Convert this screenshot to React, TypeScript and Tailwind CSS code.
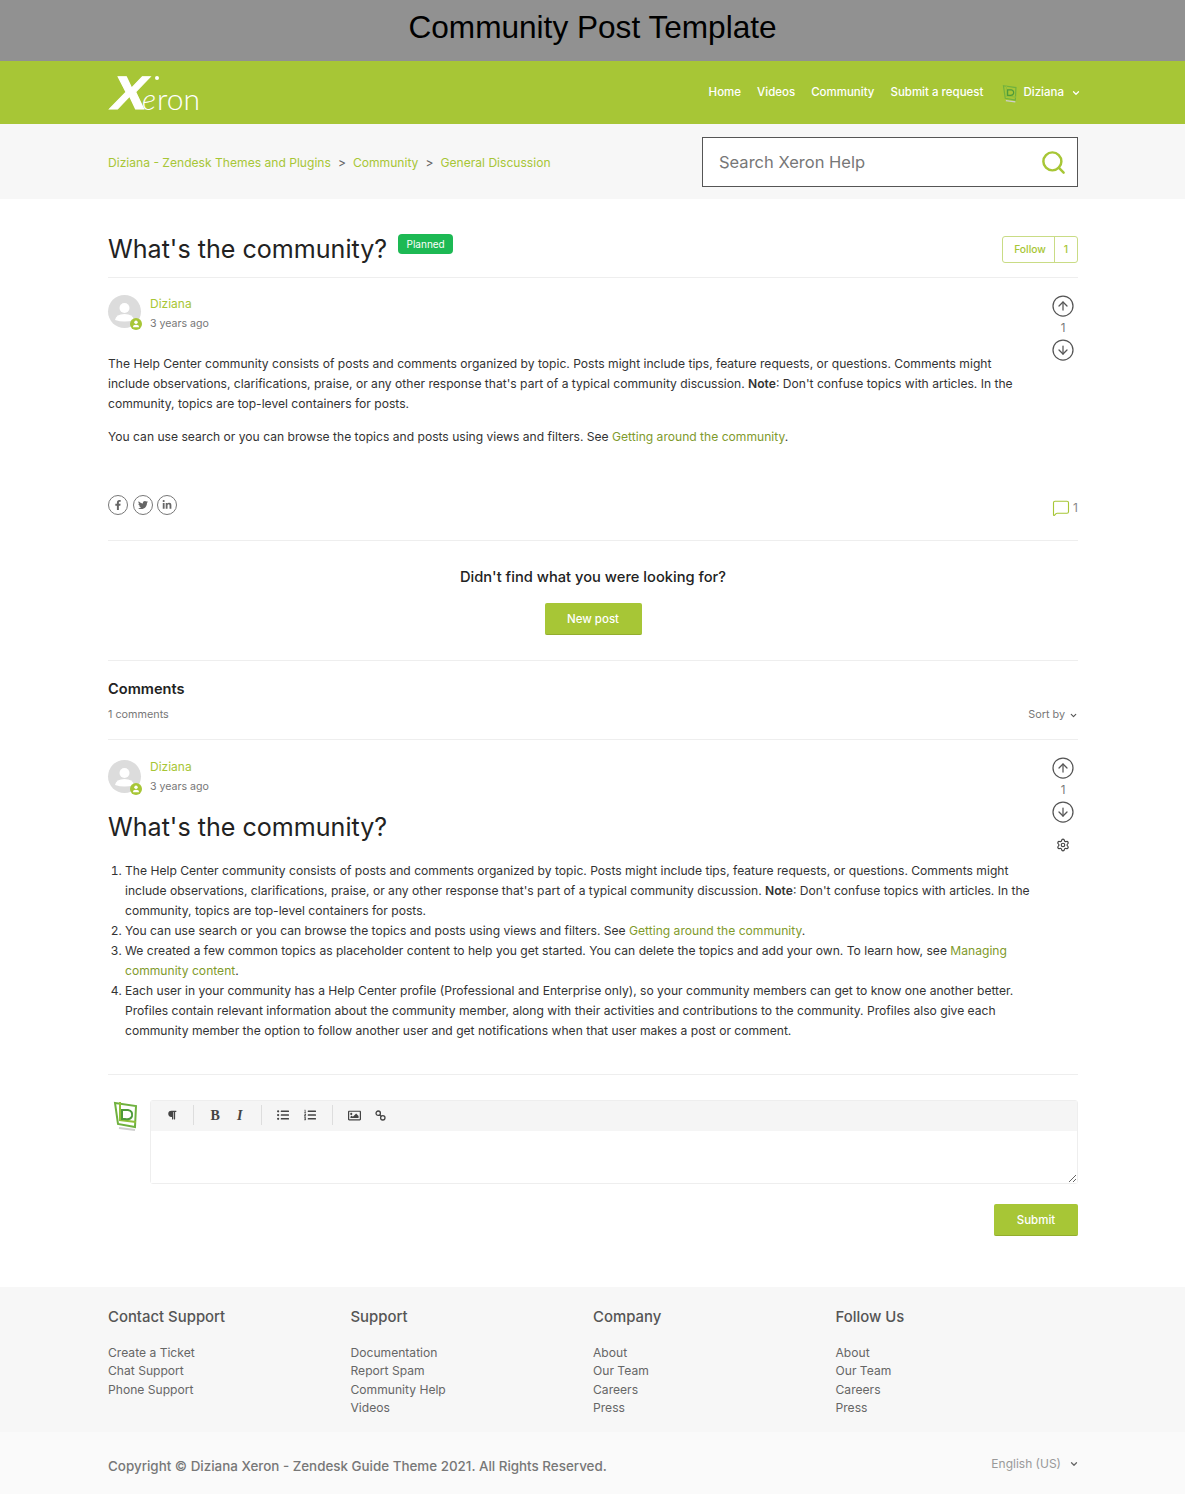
import { ChevronDown, CircleArrowDown, CircleArrowUp, MessageSquare, Search, Settings } from "lucide-react";
import { FaFacebookF, FaLinkedinIn, FaListOl, FaListUl, FaParagraph, FaRegImage, FaTwitter } from "react-icons/fa";

const footerColumns = [
  { title: "Contact Support", links: ["Create a Ticket", "Chat Support", "Phone Support"] },
  { title: "Support", links: ["Documentation", "Report Spam", "Community Help", "Videos"] },
  { title: "Company", links: ["About", "Our Team", "Careers", "Press"] },
  { title: "Follow Us", links: ["About", "Our Team", "Careers", "Press"] },
];

function LeafLogo({ className }: { className: string }) {
  return (
    <svg viewBox="0 0 26 32" fill="none" className={className}>
      <path d="M2 3 L23 6 L22 27 L5 24 Z" stroke="#6fb13f" strokeWidth="2" />
      <path d="M7 2 V20 L23 22" stroke="#8fbf3a" strokeWidth="2" />
      <path d="M9 10 H15 Q20 11 19 16 Q18 20 12 19 H9 Z" stroke="#4c9a3a" strokeWidth="2" />
      <path d="M6 28 L22 30" stroke="#cfcfcf" strokeWidth="2" />
    </svg>
  );
}

function Author({ textOffset }: { textOffset: string }) {
  return (
    <div className="flex items-start gap-[9px]">
      <div className="relative h-[33px] w-[33px] rounded-full bg-[#dcdcdc]">
        <svg viewBox="0 0 33 33" className="h-[33px] w-[33px]">
          <circle cx="16.5" cy="13" r="5" fill="#fff" />
          <path d="M7 25 Q8 19 16.5 19 Q25 19 26 25 Q16.5 28 7 25 Z" fill="#fff" />
        </svg>
        <div className="absolute -bottom-[2px] -right-[1px] flex h-3 w-3 items-center justify-center rounded-full bg-[#a7c636]">
          <svg viewBox="0 0 12 12" className="h-3 w-3">
            <circle cx="6" cy="4.3" r="1.7" fill="#fff" />
            <path d="M3 9.2 Q3 6.8 6 6.8 Q9 6.8 9 9.2 Z" fill="#fff" />
          </svg>
        </div>
      </div>
      <div className={textOffset}>
        <div className="text-[12px] leading-[20px] text-[#a7c636]">Diziana</div>
        <div className="text-[10.6px] leading-[19px] text-[#777]">3 years ago</div>
      </div>
    </div>
  );
}

function Votes() {
  return (
    <div className="flex w-[24px] flex-col items-center text-[#555]">
      <CircleArrowUp className="h-[24px] w-[24px]" strokeWidth={1.25} />
      <div className="text-[11.5px] leading-[20px] text-[#777]">1</div>
      <CircleArrowDown className="h-[24px] w-[24px]" strokeWidth={1.25} />
    </div>
  );
}

function SocialIcon({ children }: { children: React.ReactNode }) {
  return (
    <div className="flex h-[20px] w-[20px] items-center justify-center rounded-full border-[1.5px] border-[#777] text-[10px] text-[#666]">
      {children}
    </div>
  );
}

export default function App() {
  return (
    <div className="min-h-[1494px] bg-white font-['Inter',sans-serif] text-[#333]">
      <div className="flex h-[61px] items-center justify-center bg-[#919191] pb-[6px] font-['Liberation_Sans',sans-serif] text-[31.6px] text-black">
        Community Post Template
      </div>

      <header className="flex h-[63px] items-center justify-between bg-[#a7c636] pl-[108px] pr-[104px]">
        <div className="relative h-[40px] w-[95px] leading-none text-white">
          <span className="absolute left-[5px] top-[-4px] origin-left -skew-x-12 scale-x-[1.12] font-['Liberation_Sans',sans-serif] text-[47px] font-bold [-webkit-text-stroke:1px_white]">X</span>
          <span className="absolute left-[34px] top-[10px] font-['Lato',sans-serif] text-[30px] font-light italic">e</span>
          <span className="absolute left-[49px] top-[10px] font-['Lato',sans-serif] text-[30px] font-light">ron</span>
          <span className="absolute left-[47px] top-[3px] h-[4px] w-[4px] rounded-full bg-white" />
        </div>
        <nav className="flex items-center pt-px text-[11.5px] font-medium text-white">
          <span className="mr-4">Home</span>
          <span className="mr-4">Videos</span>
          <span className="mr-4">Community</span>
          <span className="mr-[19px]">Submit a request</span>
          <LeafLogo className="mr-[5px] h-[19px] w-[16px]" />
          <span className="mr-[7px]">Diziana</span>
          <ChevronDown className="h-[10px] w-[10px]" strokeWidth={3} />
        </nav>
      </header>

      <div className="flex h-[75px] items-center justify-between bg-[#f7f7f7] pl-[108px] pr-[107px]">
        <div className="flex items-center pt-[3px] text-[12.1px] text-[#a7c636]">
          <span>Diziana - Zendesk Themes and Plugins</span>
          <span className="mx-[7px] text-[#666]">&gt;</span>
          <span>Community</span>
          <span className="mx-[7px] text-[#666]">&gt;</span>
          <span>General Discussion</span>
        </div>
        <div className="mt-px flex h-[50px] w-[376px] items-center justify-between border border-[#555] bg-white pl-[16px] pr-[10px]">
          <span className="pt-px text-[16.5px] text-[#777]">Search Xeron Help</span>
          <Search className="h-[27px] w-[27px] text-[#a7c636]" strokeWidth={2.2} />
        </div>
      </div>

      <main className="pl-[108px] pr-[107px]">
        <div className="flex h-[79px] items-center justify-between border-b border-[#eeeeee] pt-[23px]">
          <div className="flex items-start">
            <h1 className="text-[25.1px] font-normal leading-[31px] text-[#222]">What's the community?</h1>
            <span className="ml-[11px] flex h-5 w-[55px] items-center justify-center rounded-sm bg-[#1db954] text-[10px] text-white">Planned</span>
          </div>
          <div className="flex h-[27px] w-[76px] rounded-[3px] border border-[#c9dc85] text-[10.3px] font-medium text-[#a7c636]">
            <span className="flex w-[52px] items-center justify-center border-r border-[#c9dc85] pl-[3px]">Follow</span>
            <span className="flex flex-1 items-center justify-center">1</span>
          </div>
        </div>

        <div className="flex justify-between pt-[17px]">
          <div className="w-[915px]">
            <Author textOffset="-mt-px" />
            <p className="mt-[21px] text-[12.1px] leading-[20px]">
              The Help Center community consists of posts and comments organized by topic. Posts might include tips, feature requests, or questions. Comments might include observations, clarifications, praise, or any other response that's part of a typical community discussion. <b className="font-semibold">Note</b>: Don't confuse topics with articles. In the community, topics are top-level containers for posts.
            </p>
            <p className="mt-[13px] text-[12.1px] leading-[20px]">
              You can use search or you can browse the topics and posts using views and filters. See <span className="text-[#7f9a2c]">Getting around the community</span>.
            </p>
          </div>
          <div className="mr-[3px] -mt-px">
            <Votes />
          </div>
        </div>

        <div className="mt-[49px] flex h-[45px] items-start justify-between border-b border-[#eeeeee]">
          <div className="-mt-px flex gap-[4.5px]">
            <SocialIcon><FaFacebookF /></SocialIcon>
            <SocialIcon><FaTwitter /></SocialIcon>
            <SocialIcon><FaLinkedinIn /></SocialIcon>
          </div>
          <div className="mt-[3px] flex items-center gap-[3px] text-[12px] text-[#888]">
            <MessageSquare className="h-[18px] w-[18px] text-[#a7c636]" strokeWidth={1.5} />
            <span>1</span>
          </div>
        </div>

        <div className="flex h-[120px] flex-col items-center border-b border-[#eeeeee] pt-[26px]">
          <div className="text-[14.7px] font-medium leading-[20px] text-[#222]">Didn't find what you were looking for?</div>
          <button className="mt-[16px] h-[32px] w-[97px] rounded-[2px] border-b border-[#93ad2d] bg-[#a7c636] pt-[2px] text-[11.5px] font-medium text-white">New post</button>
        </div>

        <div className="flex h-[79px] flex-col border-b border-[#eeeeee] pt-[18px]">
          <div className="text-[14.6px] font-semibold leading-[20px] text-[#222]">Comments</div>
          <div className="mt-[9px] flex items-center justify-between text-[10.8px] leading-[14px] text-[#777]">
            <span>1 comments</span>
            <span className="flex items-center gap-[4px]">Sort by <ChevronDown className="h-[9px] w-[9px] text-[#555]" strokeWidth={3} /></span>
          </div>
        </div>

        <div className="flex h-[335px] justify-between border-b border-[#eeeeee] pt-[20px]">
          <div className="w-[932px]">
            <Author textOffset="-mt-[3px]" />
            <h2 className="mt-[13px] text-[25.1px] font-normal leading-[36px] text-[#222]">What's the community?</h2>
            <ol className="mt-[16px] list-decimal pl-[17px] text-[12.1px] leading-[20px]">
              <li>The Help Center community consists of posts and comments organized by topic. Posts might include tips, feature requests, or questions. Comments might include observations, clarifications, praise, or any other response that's part of a typical community discussion. <b className="font-semibold">Note</b>: Don't confuse topics with articles. In the community, topics are top-level containers for posts.</li>
              <li>You can use search or you can browse the topics and posts using views and filters. See <span className="text-[#7f9a2c]">Getting around the community</span>.</li>
              <li>We created a few common topics as placeholder content to help you get started. You can delete the topics and add your own. To learn how, see <span className="text-[#7f9a2c]">Managing community content</span>.</li>
              <li>Each user in your community has a Help Center profile (Professional and Enterprise only), so your community members can get to know one another better. Profiles contain relevant information about the community member, along with their activities and contributions to the community. Profiles also give each community member the option to follow another user and get notifications when that user makes a post or comment.</li>
            </ol>
          </div>
          <div className="mr-[3px] -mt-[4px] flex flex-col items-center">
            <Votes />
            <Settings className="mt-[14px] h-[14px] w-[14px] text-[#444]" strokeWidth={2} />
          </div>
        </div>

        <div className="mt-[25px] flex">
          <LeafLogo className="ml-[5px] mr-[11px] h-[32px] w-[26px]" />
          <div className="flex h-[84px] flex-1 flex-col rounded-[3px] border border-[#eeeeee]">
            <div className="flex h-[30px] items-center bg-[#f5f5f5] pb-[2px] text-[#444]">
              <div className="flex w-[43px] justify-center border-r border-[#dddddd] py-[5px] text-[10px]"><FaParagraph /></div>
              <div className="flex h-[20px] w-[68px] items-center justify-center gap-[17px] border-r border-[#dddddd] pr-[2px] font-['Liberation_Serif',serif] text-[14px]">
                <b>B</b>
                <i className="font-bold">I</i>
              </div>
              <div className="flex w-[71px] items-center justify-center gap-[15px] border-r border-[#dddddd] py-[4px] pr-[2px] text-[12px]"><FaListUl /><FaListOl /></div>
              <div className="flex items-center gap-[14px] pl-[15px]">
                <FaRegImage className="text-[13px]" />
                <svg viewBox="0 0 12 12" fill="none" stroke="#444" strokeWidth="1.4" className="h-[11px] w-[11px]">
                  <circle cx="3.5" cy="3.5" r="2.4" />
                  <circle cx="8.5" cy="8.5" r="2.4" />
                  <path d="M5 5 L7 7" />
                </svg>
              </div>
            </div>
            <textarea className="w-full flex-1 resize-y bg-white outline-none" aria-label="Comment" />
          </div>
        </div>

        <div className="mt-[20px] flex justify-end">
          <button className="h-[32px] w-[84px] rounded-[2px] border-b border-[#93ad2d] bg-[#a7c636] pt-[2px] text-[11.5px] font-medium text-white">Submit</button>
        </div>
      </main>

      <footer className="mt-[51px]">
        <div className="grid h-[145px] grid-cols-4 bg-[#f7f7f7] pl-[108px] pr-[107px] pt-[20px]">
          {footerColumns.map((column) => (
            <div key={column.title}>
              <div className="text-[14.9px] font-medium leading-[20px] text-[#555]">{column.title}</div>
              <div className="mt-[17px] flex flex-col text-[12.1px] leading-[18.4px] text-[#666]">
                {column.links.map((link) => (
                  <span key={link}>{link}</span>
                ))}
              </div>
            </div>
          ))}
        </div>
        <div className="flex h-[62px] items-center justify-between bg-[#fafafa] pl-[108px] pr-[106px] pt-[6px]">
          <span className="text-[13.4px] font-medium text-[#777]">Copyright © Diziana Xeron - Zendesk Guide Theme 2021. All Rights Reserved.</span>
          <span className="mb-[5px] flex items-center gap-[8px] text-[12px] text-[#999]">English (US) <ChevronDown className="h-[10px] w-[10px] text-[#666]" strokeWidth={3} /></span>
        </div>
      </footer>
    </div>
  );
}
